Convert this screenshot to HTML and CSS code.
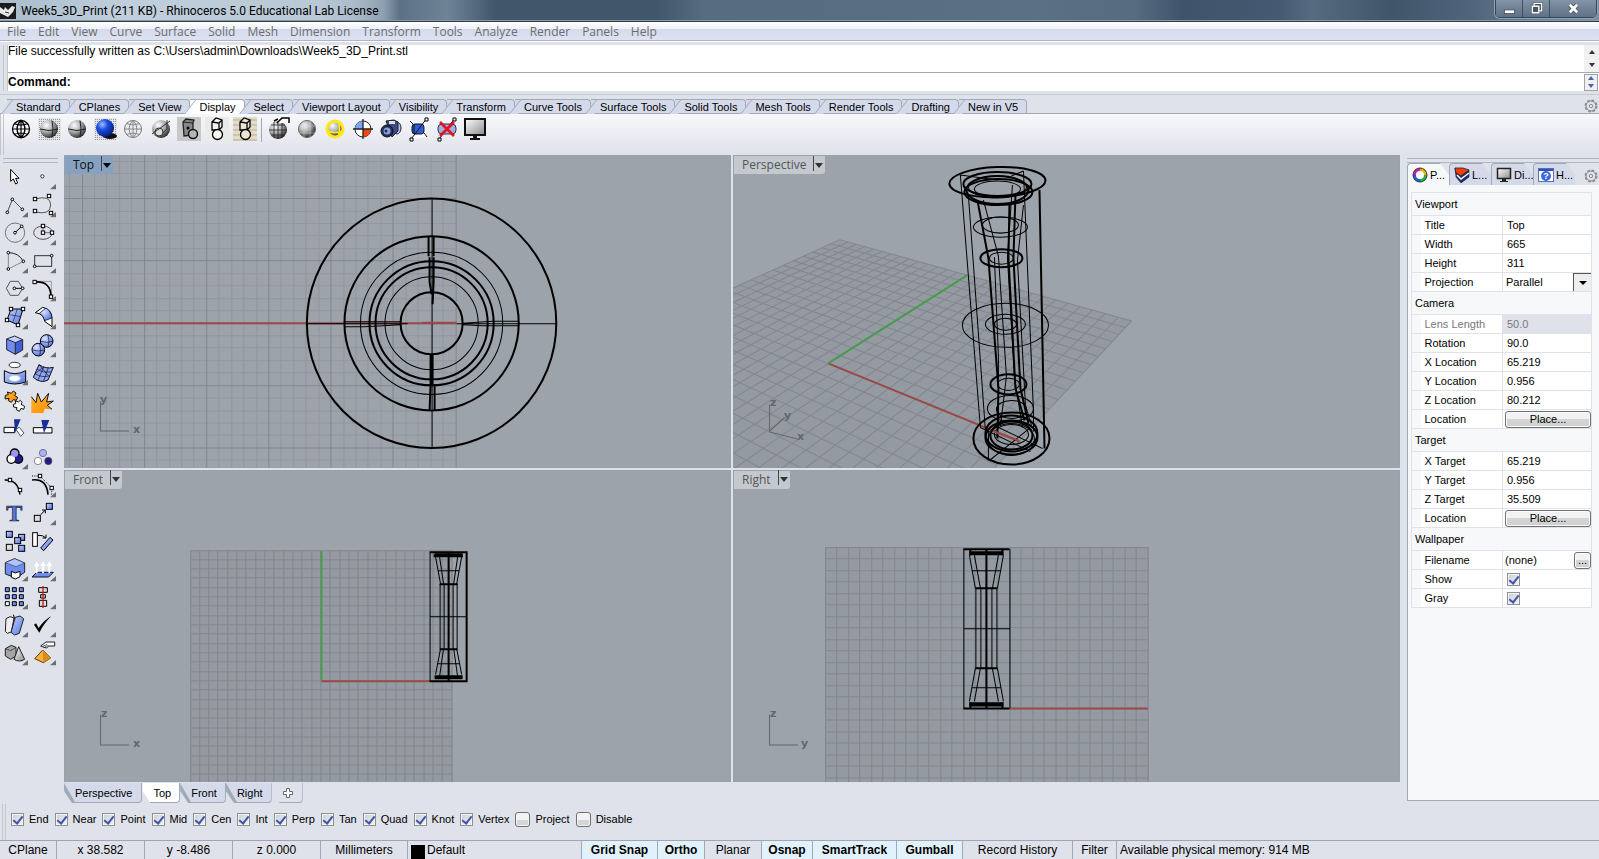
FILE: index.html
```html
<!DOCTYPE html>
<html lang="en">
  <head>
    <meta charset="UTF-8" />
    <meta name="viewport" content="width=device-width, initial-scale=1.0" />
    <title>Week5_3D_Print (211 KB) - Rhinoceros 5.0 Educational Lab License</title>
    <link rel="stylesheet" href="styles.css">
  </head>
  <body>
    <!-- shared gradients and shapes -->
    <svg class="defs" width="0" height="0" aria-hidden="true">
      <defs>
        <radialGradient id="g-ball" cx=".35" cy=".3" r=".75">
          <stop offset="0" stop-color="#fff" />
          <stop offset=".5" stop-color="#aaa" />
          <stop offset="1" stop-color="#222" />
        </radialGradient>
        <radialGradient id="g-blue" cx=".35" cy=".3" r=".75">
          <stop offset="0" stop-color="#9fc0ff" />
          <stop offset=".4" stop-color="#1c4fe0" />
          <stop offset="1" stop-color="#041a78" />
        </radialGradient>
        <radialGradient id="g-soft" cx=".35" cy=".3" r=".8">
          <stop offset="0" stop-color="#dbe4ff" />
          <stop offset="1" stop-color="#4a6ae0" />
        </radialGradient>
        <linearGradient id="g-face" x1="0" y1="0" x2="1" y2="1">
          <stop offset="0" stop-color="#c3d0ff" />
          <stop offset="1" stop-color="#5577e6" />
        </linearGradient>
        <linearGradient id="g-gray" x1="0" y1="0" x2="1" y2="1">
          <stop offset="0" stop-color="#fff" />
          <stop offset="1" stop-color="#8a8a8a" />
        </linearGradient>
        <linearGradient id="g-orange" x1="0" y1="0" x2="1" y2="1">
          <stop offset="0" stop-color="#ffb52e" />
          <stop offset="1" stop-color="#ff8a00" />
        </linearGradient>
        <pattern id="p-dots" width="2" height="2" patternUnits="userSpaceOnUse">
          <rect width="2" height="2" fill="#e3e5ea" />
          <rect width="1" height="1" fill="#9a9a9a" />
        </pattern>
        <path id="fly" d="M84 66v16H66z" fill="#6d6d6d" />
        <rect id="pt" x="-5" y="-5" width="10" height="10" fill="#fff" stroke="#000" stroke-width="3" />
        <circle id="dot" r="4" fill="#fff" stroke="#000" stroke-width="3" />
        <rect id="bx" x="-9" y="-9" width="18" height="18" fill="url(#g-face)" stroke="#000" stroke-width="3" />
        <rect id="gx" x="-9" y="-9" width="18" height="18" fill="#ddd" stroke="#000" stroke-width="3" />
        <g id="gear" fill="none" stroke="#8b8d92">
          <circle cx="7" cy="7" r="5.5" stroke-width="2" stroke-dasharray="2.6 1.7" />
          <circle cx="7" cy="7" r="5" />
          <circle cx="7" cy="7" r="1.7" />
        </g>
        <path id="globe" d="M5 14h18M14 5v18M7 8.500q7 3 14 0M7 19.500q7-3 14 0M14 5q-8 9 0 18M14 5q8 9 0 18" fill="none" />
      </defs>
    </svg>

    <header class="titlebar">
      <svg class="app-icon" viewBox="0 0 16 16">
        <rect width="16" height="16" fill="#1b1b1b" />
        <path d="M0 4l4 3 1-3 3 3 4-4 3 1-2 5-5 5-4-2-4-2z" fill="#e8e8e8" />
        <path d="M5 9l4 1" stroke="#333" />
      </svg>
      <h1>Week5_3D_Print (211 KB) - Rhinoceros 5.0 Educational Lab License</h1>
      <div class="window-buttons">
        <button aria-label="Minimize"><svg viewBox="0 0 14 14"><rect x="1.500" y="8.500" width="11" height="4" fill="#fff" stroke="#4a5666" /></svg></button>
        <button aria-label="Restore"><svg viewBox="0 0 14 14"><path d="M4.500 3.500v-2h8v8h-2M2.500 4.500h7v7h-7zM5 7h2v2H5z" fill="none" stroke="#4a5666" stroke-width="3" /><path d="M4.500 3.500v-2h8v8h-2M2.500 4.500h7v7h-7z" fill="none" stroke="#fff" stroke-width="1.500" /></svg></button>
        <button class="close" aria-label="Close"><svg viewBox="0 0 14 14"><path d="M3 3l8 8M11 3l-8 8" stroke="#4a5666" stroke-width="5" /><path d="M3 3l8 8M11 3l-8 8" stroke="#fff" stroke-width="3" /></svg></button>
      </div>
    </header>

    <nav class="menubar">
      <a href="#">File</a><a href="#">Edit</a><a href="#">View</a><a href="#">Curve</a><a href="#">Surface</a><a href="#">Solid</a><a href="#">Mesh</a><a href="#">Dimension</a><a href="#">Transform</a><a href="#">Tools</a><a href="#">Analyze</a><a href="#">Render</a><a href="#">Panels</a><a href="#">Help</a>
    </nav>

    <section class="command">
      <div class="history">
        <p>File successfully written as C:\Users\admin\Downloads\Week5_3D_Print.stl</p>
        <div class="scroll"><i class="up"></i><i class="down"></i></div>
      </div>
      <div class="prompt">
        <label for="command">Command:</label>
        <input type="text" id="command" />
        <div class="spin"><i class="up"></i><i class="down"></i></div>
      </div>
    </section>

    <section class="toolbar">
      <div class="tool-tabs">
        <button>Standard</button><button>CPlanes</button><button>Set View</button><button class="active">Display</button><button>Select</button><button>Viewport Layout</button><button>Visibility</button><button>Transform</button><button>Curve Tools</button><button>Surface Tools</button><button>Solid Tools</button><button>Mesh Tools</button><button>Render Tools</button><button>Drafting</button><button>New in V5</button>
        <svg class="gear" viewBox="0 0 14 14"><use href="#gear" /></svg>
      </div>
      <div class="tool-icons">
        <button aria-label="Wireframe"><svg viewBox="0 0 28 28"><circle cx="14" cy="14" r="8.500" fill="#fff" stroke="#000" stroke-width="1.300" /><use href="#globe" stroke="#000" stroke-width="1.200" /></svg></button>
        <button aria-label="Shaded"><svg viewBox="0 0 28 28"><rect x="3" y="3" width="23" height="22" fill="url(#p-dots)" /><circle cx="14" cy="14" r="9" fill="url(#g-ball)" /><path d="M5 14q9 3 18 0M17 5.500q2 8 0 17" fill="none" stroke="#222" /></svg></button>
        <button aria-label="Shade viewport"><svg viewBox="0 0 28 28"><circle cx="14" cy="14" r="9" fill="url(#g-ball)" /><path d="M5 14q9 3 18 0M17 5.500q2 8 0 17" fill="none" stroke="#222" /></svg></button>
        <button aria-label="Rendered"><svg viewBox="0 0 28 28"><rect x="3" y="3" width="23" height="22" fill="url(#p-dots)" /><ellipse cx="19" cy="21" rx="7" ry="3" fill="#111" /><circle cx="14" cy="13" r="9" fill="url(#g-blue)" /></svg></button>
        <button aria-label="Ghosted"><svg viewBox="0 0 28 28"><circle cx="14" cy="14" r="8.500" fill="#eceef2" stroke="#777" /><use href="#globe" stroke="#888" /></svg></button>
        <button aria-label="X-ray"><svg viewBox="0 0 28 28"><circle cx="14" cy="14" r="9" fill="url(#g-ball)" /><circle cx="12" cy="17" r="4" fill="#ddd" stroke="#333" /><path d="M5 19L23 6M20 5v9l-5 5" fill="none" stroke="#333" /></svg></button>
        <button aria-label="Technical"><svg viewBox="0 0 28 28"><rect x="2" y="2" width="24" height="24" fill="#c8c8c8" /><path d="M8 7l3-3 8 1-1 3v12l-9 1z" fill="#888" stroke="#222" stroke-width="1.300" /><path d="M8 7l10 1" stroke="#222" /><circle cx="18" cy="19" r="4.500" fill="#b5b5b5" stroke="#111" stroke-width="1.500" /><circle cx="13" cy="13" r="1.500" /></svg></button>
        <button aria-label="Artistic"><svg viewBox="0 0 28 28"><rect x="2" y="2" width="24" height="24" fill="#eaebe8" /><path d="M9 7l4-4 6 2v7l-3 3H9zM9 7l7 1v7M16 8l3-3" fill="#f4f4f2" stroke="#000" stroke-width="1.300" /><circle cx="14.500" cy="19.500" r="5" fill="#f4f4f2" stroke="#000" stroke-width="1.300" /></svg></button>
        <button aria-label="Pen"><svg viewBox="0 0 28 28"><rect x="2" y="2" width="24" height="24" fill="#e3dccb" /><path d="M2 5h24M2 10h24M2 15h24M2 20h24M2 25h24" stroke="#cfc4ac" stroke-width="2" /><path d="M9 7l4-4 6 2v7l-3 3H9zM9 7l7 1v7M16 8l3-3" fill="#ece5d4" stroke="#000" stroke-width="1.300" /><circle cx="14.500" cy="19.500" r="5" fill="#ece5d4" stroke="#000" stroke-width="1.300" /></svg></button>
        <span class="separator"></span>
        <button aria-label="Flat shade"><svg viewBox="0 0 28 28"><circle cx="13" cy="15" r="9" fill="url(#g-ball)" /><path d="M4 15h18M13 6v18M6 10h14M6 20h14M9 7v16M17 7v16" stroke="#222" stroke-width=".8" /><path d="M12 8l5-5h7v5M9 6l4-2" fill="#fff" stroke="#000" stroke-width="1.500" /></svg></button>
        <button aria-label="Shade selected"><svg viewBox="0 0 28 28"><circle cx="14" cy="14" r="8.500" fill="url(#g-ball)" stroke="#666" /><path d="M6 11h16M6 18h16M11 6v16M17 6v16" fill="none" stroke="#ccc" opacity=".5" /></svg></button>
        <button aria-label="Highlight"><svg viewBox="0 0 28 28"><circle cx="14" cy="14" r="8" fill="url(#g-ball)" stroke="#ffe81a" stroke-width="3" /><path d="M6 16q8 3 16 0M17 6q3 8 0 16" fill="none" stroke="#ffe81a" stroke-width="1.500" /></svg></button>
        <button aria-label="Colour analysis"><svg viewBox="0 0 28 28"><circle cx="14" cy="14" r="8" fill="#fff" stroke="#222" /><path d="M14 14V6a8 8 0 0 0-8 8z" fill="#7aa7f0" /><path d="M14 14h8a8 8 0 0 1-8 8z" fill="#f04a10" /><path d="M4 14h20M14 4v20" stroke="#222" stroke-width="1.300" /></svg></button>
        <button aria-label="Capture"><svg viewBox="0 0 28 28"><ellipse cx="20" cy="13" rx="4" ry="6" fill="#b9c4e8" stroke="#222" /><path d="M9 6l8-1 4 2v9l-6 6z" fill="#3a4a8a" stroke="#222" /><path d="M12 6h6v3h-6z" fill="#ddd" /><circle cx="10" cy="16" r="6" fill="#223060" stroke="#111" /><circle cx="10" cy="16" r="3.500" fill="#8fa0d8" /><circle cx="9" cy="16" r="1.500" fill="#223060" /></svg></button>
        <button aria-label="Clipping plane"><svg viewBox="0 0 28 28"><path d="M7 24L21 4v18z" fill="#fff" /><rect x="7" y="9" width="12" height="10" rx="3" fill="#2f5fd0" stroke="#113" /><path d="M9 9v10M5 6l4 4M6 24l4-5 12-16M19 18l3 4" fill="none" stroke="#111" /><path d="M5 23h3v3H5zM20 3h3v3h-3z" fill="#fff" stroke="#000" /></svg></button>
        <button aria-label="Disable clipping plane"><svg viewBox="0 0 28 28"><rect x="5" y="9" width="18" height="10" rx="4" fill="#9db0e0" stroke="#335" /><path d="M6 24l4-5 12-16" stroke="#111" /><path d="M5 23h3v3H5zM20 3h3v3h-3z" fill="#fff" stroke="#000" /><path d="M7 7l14 14M21 7L7 21" stroke="#e8101a" stroke-width="2.600" /></svg></button>
        <button aria-label="Full screen"><svg viewBox="0 0 28 28"><rect x="4" y="4" width="20" height="16" fill="url(#g-gray)" stroke="#111" stroke-width="2" /><path d="M12 20h4v3h3v2H9v-2h3z" fill="#111" /></svg></button>
      </div>
    </section>

    <main class="workspace">
      <aside class="side-tools">
        <button><svg viewBox="0 0 84 84"><path d="M32 22v36l8-7 7 15 6-3-6-14h10z" fill="#fff" stroke="#000" stroke-width="3" /></svg></button>
        <button><svg viewBox="0 0 84 84"><circle cx="43" cy="43" r="5" fill="#fff" stroke="#333" stroke-width="3" /><use href="#fly" /></svg></button>

        <button><svg viewBox="0 0 84 84"><path d="M22 67L37 28 67 58" fill="none" stroke="#555" stroke-width="3" /><use href="#dot" x="22" y="67" /><use href="#dot" x="37" y="28" /><use href="#dot" x="67" y="58" /><use href="#fly" /></svg></button>
        <button><svg viewBox="0 0 84 84"><path d="M21 27Q68 14 68 45T21 66" fill="none" stroke="#555" stroke-width="3" /><use href="#pt" x="21" y="27" /><use href="#pt" x="63" y="18" /><use href="#pt" x="21" y="63" /><use href="#fly" /><use href="#pt" x="69" y="69" /></svg></button>

        <button><svg viewBox="0 0 84 84"><circle cx="45" cy="44" r="29" fill="none" stroke="#777" stroke-width="3" /><path d="M45 44l20-19" stroke="#000" stroke-width="3" /><use href="#dot" x="45" y="44" /><use href="#dot" x="65" y="25" /><use href="#fly" /></svg></button>
        <button><svg viewBox="0 0 84 84"><ellipse cx="45" cy="44" rx="28" ry="20" fill="none" stroke="#555" stroke-width="3" /><path d="M45 24v20h27" fill="none" stroke="#333" stroke-width="2" /><use href="#pt" x="45" y="24" /><use href="#pt" x="45" y="44" /><use href="#pt" x="72" y="44" /><use href="#fly" /></svg></button>

        <button><svg viewBox="0 0 84 84"><path d="M25 20v49L70 46" fill="none" stroke="#888" stroke-width="3" /><path d="M25 20Q56 20 70 46" fill="none" stroke="#222" stroke-width="3" /><use href="#dot" x="25" y="20" /><use href="#dot" x="70" y="46" /><use href="#dot" x="25" y="69" /><use href="#fly" /></svg></button>
        <button><svg viewBox="0 0 84 84"><rect x="20" y="29" width="51" height="32" fill="none" stroke="#333" stroke-width="3" /><use href="#dot" x="71" y="29" /><use href="#dot" x="20" y="61" /><use href="#fly" /></svg></button>

        <button><svg viewBox="0 0 84 84"><path d="M19 43l12-21h24l13 21-13 21H31z" fill="none" stroke="#555" stroke-width="3" /><path d="M43 43h25" stroke="#000" stroke-width="3" /><use href="#dot" x="43" y="43" /><use href="#dot" x="68" y="43" /><use href="#fly" /></svg></button>
        <button><svg viewBox="0 0 84 84"><path d="M20 22h50v46" fill="none" stroke="#999" stroke-width="3" /><path d="M20 24Q68 20 69 68" fill="none" stroke="#000" stroke-width="5" /><use href="#fly" /><use href="#pt" x="20" y="24" /><use href="#pt" x="69" y="68" /></svg></button>

        <button><svg viewBox="0 0 84 84"><path d="M33 21h36L54 69 21 54z" fill="url(#g-face)" stroke="#000" stroke-width="3" /><path d="M52 21L38 62M28 38l35 6" stroke="#223" stroke-width="2" /><use href="#pt" x="33" y="21" /><use href="#pt" x="69" y="21" /><use href="#fly" /><use href="#pt" x="54" y="69" /><use href="#pt" x="21" y="54" /></svg></button>
        <button><svg viewBox="0 0 84 84"><path d="M22 32L44 16Q72 22 72 50v24L50 58Q50 36 22 32z" fill="#fff" stroke="#000" stroke-width="3" /><path d="M34 34L54 18Q70 28 72 48L50 56Q46 40 34 34z" fill="url(#g-soft)" stroke="#000" stroke-width="2" /><use href="#fly" /></svg></button>

        <button><svg viewBox="0 0 84 84"><path d="M20 27l24-9 24 11-22 9z" fill="#c3d0ff" /><path d="M20 27l26 11v35L20 59z" fill="#6f8df0" /><path d="M46 38l22-9v31L46 73z" fill="#3f5fd6" /><path d="M20 27l24-9 24 11v31L46 73 20 59zM20 27l26 11 22-9M46 38v35" fill="none" stroke="#223" stroke-width="3" /><use href="#fly" /></svg></button>
        <button><svg viewBox="0 0 84 84"><circle cx="56" cy="33" r="19" fill="url(#g-soft)" stroke="#000" stroke-width="3" /><circle cx="31" cy="59" r="19" fill="url(#g-soft)" stroke="#000" stroke-width="3" /><path d="M38 34q18 6 36 0M60 15q6 18 0 36M13 60q18 6 36 0M35 41q6 18 0 36" fill="none" stroke="#112" stroke-width="2" /><use href="#fly" /></svg></button>

        <button><svg viewBox="0 0 84 84"><ellipse cx="44" cy="21" rx="17" ry="8" fill="#fff" stroke="#333" stroke-width="3" /><path d="M13 38q31 18 64 0v34q-33 12-64 0z" fill="url(#g-face)" stroke="#000" stroke-width="3" /><ellipse cx="44" cy="61" rx="17" ry="9" fill="#fff" stroke="#bcd" stroke-width="3" /><use href="#fly" /></svg></button>
        <button><svg viewBox="0 0 84 84"><path d="M33 20q20 14 43 8L60 66q-22 12-44-8z" fill="#8ea6f0" stroke="#112" stroke-width="3" /><path d="M47 27L30 66M61 29L47 69M27 34q20 12 42 8M21 47q22 14 44 6M33 20l28 33M21 47l26-20" fill="none" stroke="#112" stroke-width="2" /><use href="#fly" /></svg></button>

        <button><svg viewBox="0 0 84 84"><path d="M22 18l12 4 6-7 8 6-4 8 9 5-4 9-9-2-6 8-9-5 2-7-12 2 1-11 9-2z" fill="url(#g-orange)" stroke="#111" stroke-width="3" /><path d="M46 44l9 4 6-5 5 6-3 6 11 6-3 9-8-3-5 9-9-5 2-6-10-2-1-8 7-2z" fill="#fff" stroke="#111" stroke-width="3" /></svg></button>
        <button><svg viewBox="0 0 84 84"><path d="M10 81V32l14 18 5-28 11 26 22-26-6 26 20-3-18 13 14 12-22-2-4 13z" fill="url(#g-orange)" /><path d="M10 32l14 18 5-28 11 26 22-26-6 26 20-3-18 13 14 12" fill="none" stroke="#111" stroke-width="3" /></svg></button>

        <button><svg viewBox="0 0 84 84"><path d="M12 40h32v16H12z" fill="#fff" stroke="#000" stroke-width="3" /><path d="M48 46l10-6 14 17-10 10z" fill="#fff" stroke="#555" stroke-width="3" /><path d="M42 16h20L45 56z" fill="#1c2f96" /></svg></button>
        <button><svg viewBox="0 0 84 84"><path d="M16 41h56v16H16z" fill="#fff" stroke="#000" stroke-width="3" /><path d="M40 18h24L48 58z" fill="#1c2f96" /></svg></button>

        <button><svg viewBox="0 0 84 84"><g stroke="#000" stroke-width="6"><circle cx="34" cy="51" r="12" /><circle cx="55" cy="51" r="12" /><circle cx="44" cy="34" r="12" /></g><circle cx="55" cy="51" r="11" fill="#1f1c86" /><circle cx="34" cy="51" r="11" fill="#fff" /><circle cx="44" cy="34" r="11" fill="#9a96ee" /><use href="#fly" /></svg></button>
        <button><svg viewBox="0 0 84 84"><g stroke="#555" stroke-width="2"><circle cx="45" cy="33" r="11" fill="#aab0ff" /><circle cx="30" cy="57" r="11" fill="#fff" /><circle cx="61" cy="57" r="11" fill="#1f1c86" /></g></svg></button>

        <button><svg viewBox="0 0 84 84"><path d="M14 30q40-2 46 44" fill="none" stroke="#000" stroke-width="4" /><use href="#pt" x="30" y="30" /><use href="#pt" x="60" y="60" /></svg></button>
        <button><svg viewBox="0 0 84 84"><path d="M12 30q44-6 48 44" fill="none" stroke="#000" stroke-width="5" /><path d="M12 18h24l35 36v22" fill="none" stroke="#000" stroke-width="3" stroke-dasharray="3 4" /><use href="#fly" /><use href="#pt" x="36" y="18" /><use href="#pt" x="71" y="54" /></svg></button>

        <button><svg viewBox="0 0 84 84"><text x="43" y="70" class="text-tool">T</text></svg></button>
        <button><svg viewBox="0 0 84 84"><path d="M38 50l14-14M42 36h10v10" fill="none" stroke="#000" stroke-width="3" /><use href="#bx" x="64" y="25" /><use href="#gx" x="28" y="61" /><use href="#fly" /></svg></button>

        <button><svg viewBox="0 0 84 84"><use href="#bx" x="28" y="25" /><use href="#bx" x="65" y="34" /><use href="#bx" x="53" y="44" /><use href="#gx" x="28" y="64" /><use href="#bx" x="65" y="67" /></svg></button>
        <button><svg viewBox="0 0 84 84"><rect x="14" y="20" width="14" height="41" fill="#fff" stroke="#000" stroke-width="3" /><path d="M30 28q14-2 24 8M54 26v10H44" fill="none" stroke="#000" stroke-width="3" /><path d="M38 66l28-32 9 8-28 32z" fill="url(#g-face)" stroke="#000" stroke-width="3" /></svg></button>

        <button><svg viewBox="0 0 84 84"><path d="M16 26l28-12 30 13v28L48 72 16 60z" fill="#6f8df0" stroke="#222" stroke-width="3" /><path d="M16 26l28-12 30 13-26 11z" fill="#b3c3ff" stroke="#345" stroke-width="2" /><path d="M34 52l12 5 14-5v16l-14 7-12-5z" fill="#fff" stroke="#000" stroke-width="3" /><use href="#fly" /></svg></button>
        <button><svg viewBox="0 0 84 84"><path d="M26 55h50L62 69H12z" fill="#6f8df0" stroke="#112" stroke-width="3" /><path d="M26 58V28m-6 8l6-9 6 9M45 58V28m-6 8l6-9 6 9M64 58V28m-6 8l6-9 6 9" fill="none" stroke="#fff" stroke-width="5" /><use href="#fly" /></svg></button>

        <button><svg viewBox="0 0 84 84"><g fill="#6f8df0" stroke="#000" stroke-width="3"><path d="M16 17h12v12H16zM37 17h12v12H37zM58 17h12v12H58zM16 38h12v12H16zM37 38h12v12H37zM58 38h12v12H58zM37 59h12v12H37zM58 59h12v12H58z" /><path d="M16 59h12v12H16z" fill="#fff" /></g><use href="#fly" /></svg></button>
        <button><svg viewBox="0 0 84 84"><g fill="#ddd" stroke="#000" stroke-width="3"><path d="M32 17h26v14H32zM38 38h14v10H38zM34 55h22v18H34z" /></g><path d="M45 12v66" stroke="#c81818" stroke-width="4" /><use href="#fly" /></svg></button>

        <button><svg viewBox="0 0 84 84"><path d="M18 26l12-6 12 4-8 42-12 4-6-6z" fill="#eee" stroke="#222" stroke-width="3" /><path d="M46 22l14-4 11 8-13 44-14 5-11-8z" fill="url(#g-face)" stroke="#222" stroke-width="3" /><path d="M40 14l4 12" stroke="#000" stroke-width="3" /><use href="#fly" /></svg></button>
        <button><svg viewBox="0 0 84 84"><path d="M18 44l6-4 8 14Q46 32 70 18 46 42 34 68z" /><use href="#fly" /></svg></button>

        <button><svg viewBox="0 0 84 84"><path d="M16 32l18-10 14 6v26L32 64 16 54z" fill="#a5a5a5" stroke="#222" stroke-width="3" /><path d="M16 32l16 6 16-10" fill="none" stroke="#222" stroke-width="2" /><path d="M56 26L42 64q16 10 32 0z" fill="url(#g-gray)" stroke="#222" stroke-width="3" /><use href="#fly" /></svg></button>
        <button><svg viewBox="0 0 84 84"><path d="M44 36L20 62l26 12 22-14z" fill="#f5b041" stroke="#5a3a00" stroke-width="3" /><path d="M44 36l2 38 22-14z" fill="#d98c1a" /><path d="M38 24l16-12h26v12H62l-6 6-8-2z" fill="#fff" stroke="#222" stroke-width="3" /><path d="M44 25l14-6M50 27l12-5" stroke="#222" stroke-width="2" /><use href="#fly" /></svg></button>
      </aside>

      <div class="center">
        <div class="viewports">
          <section class="viewport active">
            <svg viewBox="1 0 667 312" preserveAspectRatio="xMinYMin slice">
              <g id="grid-top"></g>
              <path d="M0 168h393" class="axis-x" />
              <g class="wire">
                <circle cx="368" cy="168" r="124.500" class="w2" />
                <circle cx="368" cy="168" r="87" class="w2" />
                <circle cx="368" cy="168" r="71" />
                <circle cx="368" cy="168" r="62" class="w2" />
                <circle cx="368" cy="168" r="56" class="w2" />
                <circle cx="368" cy="168" r="46.500" />
                <circle cx="368" cy="168" r="31" class="w2" />
                <path d="M368.500 43.500v249M393 168.500h100M281 171.500h20l36-2M281 166.500h56M399 169.500l20 1h36M399 168l30-2h26M244 168.500h100" />
                <path d="M365 81v20M370 81v20M366 102v25l2 12M370 102v25l-1 22M367 199v30l-1 26M369 199v30M371 229v26" class="w2" />
              </g>
              <path d="M359 167.500h34" class="axis-x" />
              <g class="gizmo"><path d="M37.500 246v29.500H66" /><text x="37" y="248">y</text><text x="70" y="278">x</text></g>
            </svg>
            <button class="vp-label">Top<i class="down"></i></button>
          </section>

          <section class="viewport">
            <svg viewBox="1 0 667 312" preserveAspectRatio="xMinYMin slice">
              <g id="grid-persp"></g>
              <path d="M96 208L287 286" class="axis-x" />
              <path d="M96 208L235 120" class="axis-y" />
              <g class="wire">
                <ellipse cx="265" cy="27" rx="48" ry="15" class="w2" transform="rotate(-2 265 27)" />
                <ellipse cx="265" cy="29" rx="34" ry="12" class="w2" />
                <ellipse cx="265" cy="32" rx="29" ry="11" />
                <ellipse cx="266" cy="37" rx="34" ry="13" class="w2" />
                <ellipse cx="265" cy="35" rx="31" ry="14" class="w2" />
                <ellipse cx="265" cy="34" rx="23" ry="8" />
                <ellipse cx="268" cy="72" rx="27" ry="10" />
                <ellipse cx="268" cy="70" rx="18" ry="8" />
                <ellipse cx="269" cy="103" rx="21" ry="9" class="w2" />
                <ellipse cx="269" cy="103" rx="12" ry="6" />
                <ellipse cx="273" cy="170" rx="43" ry="22" />
                <ellipse cx="273" cy="169" rx="20" ry="10" />
                <ellipse cx="273" cy="169" rx="11" ry="6" />
                <ellipse cx="276" cy="229" rx="18" ry="10" class="w2" />
                <ellipse cx="276" cy="229" rx="11" ry="6" />
                <ellipse cx="278" cy="253" rx="23" ry="13" />
                <ellipse cx="279" cy="254" rx="15" ry="9" />
                <ellipse cx="279" cy="283" rx="38" ry="26" class="w2" />
                <ellipse cx="279" cy="278" rx="26" ry="18" class="w2" />
                <ellipse cx="279" cy="282" rx="26" ry="17" class="w2" />
                <ellipse cx="279" cy="280" rx="21" ry="14" class="w2" />
                <ellipse cx="279" cy="279" rx="17" ry="10" />
                <ellipse cx="279" cy="284" rx="23" ry="16" />
                <path d="M228 20l20 252M236 40l17 235M291 16l10 240v20M291 50l-6 55 8 145 6 20M251 45l15 56 8 120-6 50M262 102l4 100v70M280 30l-5 72 7 120 8 50" />
                <path d="M307 35l5 258M245 45l11 58 10 130-1 50M277 50l-1 53 7 130 9 32M283 40l-2 63 7 130 8 35" class="w2" />
                <path d="M228 20l37 5M291 16l-12 5M248 272l50 24M257 305l40-32M262 270l48 23M256 305v-32" />
              </g>
              <path d="M262 276l24 9" class="axis-x" />
              <g class="gizmo"><path d="M37.500 249v27.500l28 7M37.500 276l15-14" /><text x="38" y="251">z</text><text x="52" y="264">y</text><text x="65" y="285">x</text></g>
            </svg>
            <button class="vp-label">Perspective<i class="down"></i></button>
          </section>

          <section class="viewport">
            <svg viewBox="1 0 667 312" preserveAspectRatio="xMinYMin slice">
              <g id="grid-front"></g>
              <path d="M258 81v129" class="axis-y" />
              <path d="M258 211h108" class="axis-x" />
              <g class="wire">
                <path d="M366.500 82v129M376.500 114v64M380.500 114v64M389.500 114v64M393.500 114v64M366 146.500h37M374 100.500h22M374 193.500h22M372 87l5 27M376 87l4 27M398 87l-5 27M394 87l-4 27M377 178l-5 26M380 178l-4 28M393 178l5 26M390 178l4 28" />
                <path d="M366 82h37v129h-37M385 82v129M376 114h18M376 179h18M371 84v3M398 84v3" class="w2" />
                <path d="M371 85h28M371 207h28" class="w4" />
              </g>
              <g class="gizmo"><path d="M37.500 244v30.500H66" /><text x="38" y="247">z</text><text x="70" y="277">x</text></g>
            </svg>
            <button class="vp-label">Front<i class="down"></i></button>
          </section>

          <section class="viewport">
            <svg viewBox="1 0 667 312" preserveAspectRatio="xMinYMin slice">
              <g id="grid-right"></g>
              <path d="M277 238h138" class="axis-x" />
              <g class="wire">
                <path d="M231.500 79v159M277.500 79v159M243.500 118v80M248.500 118v80M259.500 118v80M264.500 118v80M231 158.500h46M240 100.500h28M240 217.500h28M237 85l6 33M242 85l6 33M271 85l-6 33M266 85l-6 33M243 198l-6 33M248 198l-6 33M265 198l6 33M260 198l6 33" />
                <path d="M231 79h46M231 238h46M254 79v159M243 118h22M243 198h22M238 80v5M270 80v5M238 232v5M270 232v5" class="w2" />
                <path d="M237 83h34M237 234h34" class="w4" />
              </g>
              <g class="gizmo"><path d="M37.500 244v30.500H66" /><text x="38" y="247">z</text><text x="69" y="277">y</text></g>
            </svg>
            <button class="vp-label">Right<i class="down"></i></button>
          </section>
        </div>

        <div class="vp-tabs">
          <button>Perspective</button><button class="active">Top</button><button>Front</button><button>Right</button><button class="add" aria-label="New viewport"><svg viewBox="0 0 10 10"><path d="M3.500.5h3v3h3v3h-3v3h-3v-3h-3v-3h3z" fill="#fff" stroke="#666" /></svg></button>
        </div>
      </div>

      <aside class="panel">
        <div class="panel-tabs">
          <button class="active"><svg viewBox="0 0 16 16"><g fill="none" stroke-width="4"><path d="M8 3a5 5 0 0 1 5 5" stroke="#f0b000" /><path d="M13 8a5 5 0 0 1-5 5" stroke="#22b040" /><path d="M8 13a5 5 0 0 1-5-5" stroke="#2060e0" /><path d="M3 8a5 5 0 0 1 5-5" stroke="#d020a0" /></g><circle cx="8" cy="8" r="4" fill="#fff" /><circle cx="8" cy="8" r="7" fill="none" stroke="#333" /></svg>P...</button>
          <button><svg viewBox="0 0 16 16"><path d="M1 1l6 6 8-4v7l-8 6-5-6z" fill="#1b2f70" stroke="#222" stroke-width=".6" /><path d="M1 1l8 0 6 2-8 6-5-3z" fill="#f04010" stroke="#222" stroke-width=".8" /><path d="M3 8l4 4 8-6" fill="none" stroke="#fff" stroke-width="1.500" /></svg>L...</button>
          <button><svg viewBox="0 0 16 16"><rect x="1.500" y="1.500" width="13" height="10" fill="url(#g-gray)" stroke="#222" stroke-width="1.500" /><path d="M6 12h4v2h2v1H4v-1h2z" fill="#222" /></svg>Di...</button>
          <button><svg viewBox="0 0 16 16"><rect x=".5" y="1.500" width="15" height="13" fill="#fff" stroke="#5b6fb0" /><path d="M1 2h14v2H1z" fill="#3450b8" /><circle cx="8" cy="9" r="5" fill="#3a68e0" /><text x="8" y="12" class="help-mark">?</text></svg>H...</button>
          <svg class="gear" viewBox="0 0 14 14"><use href="#gear" /></svg>
        </div>
        <div class="panel-body">
          <table class="props">
            <colgroup><col class="gutter" /><col class="name" /><col /></colgroup>
            <tbody>
              <tr class="group"><th colspan="3">Viewport</th></tr>
              <tr><td></td><th>Title</th><td>Top</td></tr>
              <tr><td></td><th>Width</th><td>665</td></tr>
              <tr><td></td><th>Height</th><td>311</td></tr>
              <tr><td></td><th><label for="projection">Projection</label></th><td class="field"><div class="select"><select id="projection"><option>Parallel</option><option>Perspective</option></select><i class="down"></i></div></td></tr>
              <tr class="group"><th colspan="3">Camera</th></tr>
              <tr class="disabled"><td></td><th>Lens Length</th><td>50.0</td></tr>
              <tr><td></td><th>Rotation</th><td>90.0</td></tr>
              <tr><td></td><th>X Location</th><td>65.219</td></tr>
              <tr><td></td><th>Y Location</th><td>0.956</td></tr>
              <tr><td></td><th>Z Location</th><td>80.212</td></tr>
              <tr><td></td><th>Location</th><td class="field"><button class="place">Place...</button></td></tr>
              <tr class="group"><th colspan="3">Target</th></tr>
              <tr><td></td><th>X Target</th><td>65.219</td></tr>
              <tr><td></td><th>Y Target</th><td>0.956</td></tr>
              <tr><td></td><th>Z Target</th><td>35.509</td></tr>
              <tr><td></td><th>Location</th><td class="field"><button class="place">Place...</button></td></tr>
              <tr class="group"><th colspan="3">Wallpaper</th></tr>
              <tr><td></td><th>Filename</th><td class="field"><div class="file"><span>(none)</span><button>...</button></div></td></tr>
              <tr><td></td><th><label for="show">Show</label></th><td><input type="checkbox" id="show" checked /></td></tr>
              <tr><td></td><th><label for="gray">Gray</label></th><td><input type="checkbox" id="gray" checked /></td></tr>
            </tbody>
          </table>
        </div>
      </aside>
    </main>

    <section class="osnap">
      <label><input type="checkbox" checked />End</label>
      <label><input type="checkbox" checked />Near</label>
      <label><input type="checkbox" checked />Point</label>
      <label><input type="checkbox" checked />Mid</label>
      <label><input type="checkbox" checked />Cen</label>
      <label><input type="checkbox" checked />Int</label>
      <label><input type="checkbox" checked />Perp</label>
      <label><input type="checkbox" checked />Tan</label>
      <label><input type="checkbox" checked />Quad</label>
      <label><input type="checkbox" checked />Knot</label>
      <label><input type="checkbox" checked />Vertex</label>
      <label><input type="checkbox" class="push" />Project</label>
      <label><input type="checkbox" class="push" />Disable</label>
    </section>

    <footer class="statusbar">
      <span>CPlane</span>
      <span>x 38.582</span>
      <span>y -8.486</span>
      <span>z 0.000</span>
      <span>Millimeters</span>
      <span class="layer"><i></i>Default</span>
      <button class="on">Grid Snap</button>
      <button class="on">Ortho</button>
      <button>Planar</button>
      <button class="on">Osnap</button>
      <button class="on">SmartTrack</button>
      <button class="on">Gumball</button>
      <button>Record History</button>
      <button>Filter</button>
      <span class="memory">Available physical memory: 914 MB</span>
    </footer>

    <script src="grids.js"></script>
  </body>
</html>
```

FILE: styles.css
```css
* {
  box-sizing: border-box;
}
body {
  margin: 0;
  min-height: 100vh;
  display: flex;
  flex-direction: column;
  background: #dfe2ea;
  font-family: "Liberation Sans", Arial, sans-serif;
  font-size: 11px;
  color: #000;
}
button {
  font: inherit;
  color: inherit;
  border: none;
  background: none;
  padding: 0;
}
p,
h1 {
  margin: 0;
}
.defs {
  position: absolute;
}
.up,
.down {
  display: block;
  width: 0;
  height: 0;
  border: 3px solid transparent;
}
.up {
  border-top: none;
  border-bottom: 4px solid #333;
}
.down {
  border-bottom: none;
  border-top: 4px solid #333;
}

/* title bar */
.titlebar {
  height: 22px;
  display: flex;
  align-items: flex-start;
  border-bottom: 1px solid #2f3c4b;
  box-shadow: inset 0 -1px #8a9aac;
  background: linear-gradient(90deg, #a9bccb 0, #c0cfdb 8%, #b9c8d5 20%, #aebdcb 22%, #8da0b1 24%, #5d7186 25%, #6f8397 28%, #40566b 31%, #40566b 41%, #556b80 44%, #5a7085 65%, #566b80 71%, #3f546a 74%, #455a72 80%, #566b80 82%, #40556a 87%, #50657b 92%, #7c8ea0 100%);
}
.app-icon {
  width: 16px;
  height: 16px;
  margin: 3px 5px 0 0;
}
.titlebar h1 {
  font: 12px/22px Roboto, sans-serif;
  flex: 1;
}
.window-buttons {
  display: flex;
  margin-right: 2px;
  border: 1px solid #33475b;
  border-top: none;
  border-radius: 0 0 5px 5px;
  box-shadow: 0 0 0 1px #93a3b3;
}
.window-buttons button {
  width: 27px;
  height: 17px;
  border-right: 1px solid #3e5064;
  background: linear-gradient(#8394a5, #5e7186);
}
.window-buttons svg {
  width: 13px;
  height: 13px;
  display: block;
  margin: 0 auto;
}
.window-buttons .close {
  width: 46px;
  border-right: none;
}

/* menu */
.menubar {
  height: 20px;
  display: flex;
  padding-left: 7px;
  gap: 12px;
  border-bottom: 1px solid #fff;
  box-shadow: inset 0 -1px #b0b6c8;
  background: linear-gradient(#fff 0, #eef0f8 7px, #d5dbec 7px, #dee3f4 100%);
}
.menubar a {
  font: 12px/20px "Open Sans", sans-serif;
  color: #6d6d6d;
  text-decoration: none;
}

/* command area */
.command {
  margin-top: 3px;
  padding-left: 7px;
  position: relative;
}
.command::before {
  content: "";
  position: absolute;
  left: 3px;
  top: 0;
  bottom: 0;
  width: 3px;
  border: 1px solid #c0c6d0;
  border-width: 0 1px;
}
.history,
.prompt {
  display: flex;
  background: #fff;
  font-size: 12px;
}
.history {
  height: 28px;
  border-bottom: 1px solid #a0a9b6;
}
.history p {
  flex: 1;
  padding-left: 1px;
  line-height: 12px;
}
.scroll,
.spin {
  width: 15px;
  display: flex;
  flex-direction: column;
  align-items: center;
  justify-content: space-around;
  background: #f0f0f0;
}
.prompt {
  height: 18px;
  align-items: center;
}
.prompt label {
  font-weight: bold;
  padding-left: 1px;
}
.prompt input {
  flex: 1;
  border: none;
  outline: none;
  background: none;
}
.spin {
  width: 14px;
  height: 17px;
  margin-right: 1px;
  border: 1px solid #a0a0a8;
}
.spin .up {
  border-bottom-color: #4a5fae;
}
.spin .down {
  border-top-color: #4a5fae;
}

/* toolbar with tabs */
.toolbar {
  margin-top: 3px;
  border-top: 1px solid #c5c9d0;
}
.tool-tabs {
  display: flex;
  height: 19px;
  padding: 4px 1px 0 7px;
  border-bottom: 1px solid #a0a9b6;
}
.tool-tabs button {
  position: relative;
  isolation: isolate;
  height: 15px;
  padding: 0 8px 0 9px;
  line-height: 14px;
  background: #d5daea;
  border-top: 1px solid #a0a9b6;
  border-right: 1px solid #a0a9b6;
  border-bottom: 1px solid #a0a9b6;
  border-radius: 0 4px 0 0;
  white-space: nowrap;
}
.tool-tabs button::before {
  content: "";
  position: absolute;
  left: 0;
  top: -1px;
  width: 8px;
  height: 14px;
  background: inherit;
  border-left: 1px solid #a0a9b6;
  border-top: 1px solid #a0a9b6;
  transform: skewX(-38deg);
  z-index: -1;
}
.tool-tabs .active {
  background: #fff;
  border-bottom-color: #fff;
}
.gear {
  width: 14px;
  height: 14px;
  margin-left: auto;
}
.tool-icons {
  display: flex;
  height: 41px;
  padding: 1px 0 0 3px;
  border-left: 4px double #c0c6d0;
  background: linear-gradient(#f7f8fa, #dfe2ea);
}
.tool-icons button,
.tool-icons svg {
  width: 28px;
  height: 28px;
  display: block;
}
.tool-icons .separator {
  width: 1px;
  height: 24px;
  margin: 3px 3px 0 2px;
  background: #a0a9b6;
}

/* main area */
.workspace {
  flex: 1;
  display: flex;
}
.side-tools {
  width: 64px;
  display: grid;
  grid-template-columns: 28px 28px;
  align-content: start;
  margin-top: 3px;
  padding-top: 4px;
  position: relative;
}
.side-tools::before,
.panel::before {
  content: "";
  position: absolute;
  top: 0;
  left: 3px;
  right: 6px;
  height: 3px;
  border: 1px solid #b0b7c3;
  border-width: 1px 0;
}
.side-tools button,
.side-tools svg {
  width: 28px;
  height: 28px;
  display: block;
}
.text-tool {
  font: bold 72px "Liberation Serif", serif;
  text-anchor: middle;
  fill: #5577e6;
  stroke: #112;
  stroke-width: 2px;
}
.side-tools svg {
  overflow: visible;
}
.center {
  flex: 1;
  display: flex;
  flex-direction: column;
}
.viewports {
  flex: 1;
  display: grid;
  grid-template-columns: 1fr 1fr;
  grid-template-rows: 1fr 1fr;
  gap: 2px;
}
.viewport {
  position: relative;
  overflow: hidden;
  background: #9da3aa;
  box-shadow: inset 0 0 0 1px #98a1ae;
}
.viewport > svg {
  position: absolute;
  width: 100%;
  height: 100%;
}
.vp-label {
  position: absolute;
  left: 1px;
  top: 1px;
  height: 18px;
  display: flex;
  align-items: center;
  padding-left: 8px;
  font: 12px/18px "Open Sans", sans-serif;
  color: #555;
  background: #c4c9d0;
  border-radius: 0 0 3px 0;
}
.vp-label .down {
  box-sizing: content-box;
  border-width: 5px 4px 0;
  margin: 0 2px 0 9px;
  position: relative;
}
.vp-label .down::before {
  content: "";
  position: absolute;
  left: -6px;
  top: -12px;
  width: 1px;
  height: 15px;
  background: #444;
}
.viewport.active .vp-label {
  background: #86a2c0;
  color: #111;
}
.viewport.active .vp-label .down {
  border-top-color: #000;
}
.minor {
  stroke: #91979e;
  fill: none;
}
.major {
  stroke: #82868e;
  fill: none;
}
.fine {
  fill: #949aa1;
}
.wire {
  stroke: #000;
  fill: none;
  stroke-width: 1px;
}
.w2 {
  stroke-width: 2px;
}
.w4 {
  stroke-width: 4px;
}
.axis-x {
  stroke: #9a4848;
  stroke-width: 2px;
}
.axis-y {
  stroke: #4a9a4c;
  stroke-width: 2px;
}
.gizmo path {
  stroke: #63666b;
  fill: none;
}
.gizmo text {
  font: bold 11px "DejaVu Sans", sans-serif;
  fill: #63666b;
}

.vp-tabs {
  display: flex;
  height: 22px;
  padding-top: 1px;
}
.vp-tabs button {
  height: 20px;
  padding: 0 8px 0 11px;
  background: linear-gradient(60deg, #a0a9b6 9px, #d5daea 10px);
  border-right: 1px solid #a0a9b6;
  border-bottom: 1px solid #a0a9b6;
  border-radius: 0 0 4px 0;
  clip-path: polygon(0 0, 100% 0, 100% 100%, 8px 100%, 0 8px);
}
.vp-tabs button:first-child {
  padding-right: 9px;
}
.vp-tabs .active {
  background: #fff;
}
.vp-tabs .add {
  width: 31px;
  background: #dfe2ea;
}
.vp-tabs .add svg {
  width: 10px;
  height: 10px;
  display: block;
}

/* properties panel */
.panel {
  width: 199px;
  padding: 8px 0 3px 7px;
  display: flex;
  flex-direction: column;
  position: relative;
}
.panel::before {
  top: 3px;
  left: 7px;
  right: 0;
}
.panel-tabs {
  display: flex;
  height: 22px;
}
.panel-tabs button {
  width: 42px;
  height: 22px;
  display: flex;
  align-items: center;
  gap: 2px;
  padding-left: 4px;
  background: #d5daea;
  border: 1px solid #a0a9b6;
  border-width: 1px 0 0 1px;
  border-radius: 4px 0 0 0;
  clip-path: polygon(0 0, 33px 0, 100% 12px, 100% 100%, 0 100%);
  white-space: nowrap;
}
.panel-tabs button svg {
  width: 16px;
  height: 16px;
  flex: none;
}
.panel-tabs .active {
  background: #f7f8fa;
}
.panel-tabs .gear {
  margin: 6px 1px 0 auto;
}
.help-mark {
  font: bold 9px "Liberation Sans", sans-serif;
  fill: #fff;
  text-anchor: middle;
}
.panel-body {
  flex: 1;
  background: #f7f8fa;
  border: 1px solid #a0a9b6;
  border-width: 0 0 1px 1px;
  padding: 7px 7px 0 3px;
}
.props {
  width: 100%;
  border-collapse: collapse;
  table-layout: fixed;
}
.props .gutter {
  width: 9px;
}
.props .name {
  width: 82px;
}
.props td,
.props th {
  height: 19px;
  padding: 0 0 0 4px;
  border: 1px solid #dfe2ea;
  border-left: none;
  background: #fff;
  font-weight: normal;
  text-align: left;
  line-height: 16px;
}
.props tr:not(.group) td:first-child {
  padding: 0;
  background: #f7f8fa;
  border-left: 1px solid #dfe2ea;
  border-right: none;
}
.props .group th {
  height: 23px;
  padding-left: 3px;
  background: #f7f8fa;
  border-left: 1px solid #dfe2ea;
}
.props tr:not(.group) td:last-child {
  border-right: 1px solid #dfe2ea;
}
.props .disabled th,
.props .disabled td {
  color: #777;
}
.props tr.disabled td:last-child {
  background: #dfe2ea;
}
.props .field {
  padding-left: 2px;
}
.select,
.file {
  position: relative;
  display: flex;
  align-items: center;
  justify-content: space-between;
}
.select select {
  appearance: none;
  width: 100%;
  height: 17px;
  padding: 0 1px;
  border: none;
  background: #fff;
  font: inherit;
}
.select .down {
  box-sizing: content-box;
  border: none;
  position: absolute;
  right: 0;
  width: 17px;
  height: 17px;
  background: #eee;
  border-left: 1px solid #555;
  border-top: 1px solid #555;
}
.select .down::after {
  content: "";
  position: absolute;
  left: 5px;
  top: 7px;
  border: 4px solid transparent;
  border-bottom: none;
  border-top-color: #000;
}
.place,
.file button {
  height: 17px;
  border: 1px solid #707070;
  border-radius: 3px;
  background: linear-gradient(#f2f2f2 50%, #d5d5d5 50%, #cfcfcf);
  box-shadow: inset 0 0 0 1px #fcfcfc;
  line-height: 14px;
}
.place {
  display: block;
  width: 100%;
}
.file button {
  width: 17px;
}

input[type="checkbox"] {
  appearance: none;
  width: 13px;
  height: 13px;
  margin: 0;
  border: 1px solid #8e8f8f;
  background: linear-gradient(135deg, #c8cdd6, #f4f4f4);
  box-shadow: inset 0 0 0 1px #f4f4f4;
  position: relative;
}
.props input[type="checkbox"] {
  display: block;
}
input[type="checkbox"]:checked::after {
  content: "";
  position: absolute;
  left: 3px;
  top: 0;
  width: 4px;
  height: 8px;
  border: solid #3f56a6;
  border-width: 0 2px 2px 0;
  transform: rotate(38deg);
}
input[type="checkbox"].push {
  width: 15px;
  height: 15px;
  border-color: #707070;
  border-radius: 3px;
  background: linear-gradient(#f2f2f2 50%, #d5d5d5 50%);
}

/* object snaps */
.osnap {
  height: 36px;
  display: flex;
  align-items: center;
  gap: 6px;
  margin-left: 2px;
  padding: 0 0 6px 5px;
  border-left: 4px double #c0c6d0;
}
.osnap label {
  display: flex;
  align-items: center;
  gap: 5px;
}

/* status bar */
.statusbar {
  display: grid;
  grid-template-columns: 57px 88px 88px 88px 87px 174px 76px 47px 57px 51px 84px 66px 110px 44px 1fr;
  height: 19px;
  border-top: 1px solid #a0a5b5;
  font-size: 12px;
  line-height: 19px;
  text-align: center;
}
.statusbar > * {
  border-right: 1px solid #a0a9b6;
}
.statusbar .on {
  font-weight: bold;
  background: #e2f2fc;
}
.statusbar .layer {
  display: flex;
  gap: 2px;
}
.layer i {
  width: 14px;
  height: 14px;
  margin: 4px 0 0 3px;
  background: #000;
}
.statusbar .memory {
  text-align: left;
  padding-left: 3px;
  border-right: none;
}
```

FILE: grids.js
```javascript
const NS = "http://www.w3.org/2000/svg";

function addPath(parent, d, cls) {
  const path = document.createElementNS(NS, "path");
  path.setAttribute("d", d);
  path.setAttribute("class", cls);
  parent.appendChild(path);
}

// lines counted from the corner (x, y), `every` cells apart from the next major one
function flatGrid(id, x, y, w, h, step, every, dir) {
  const g = document.getElementById(id);
  let minor = "";
  let major = "";
  for (let i = 0; i * step <= w + 1; i++) {
    const px = Math.floor(x + dir * i * step) + 0.5;
    const seg = `M${px} ${y}v${h}`;
    if (i % every === 0) major += seg;
    else minor += seg;
  }
  const left = dir < 0 ? x - w : x;
  const first = dir < 0 ? 168 % step : y;
  const mid = Math.round((168 - first) / step);
  for (let i = 0; first + i * step < y + h; i++) {
    const py = Math.floor(first + i * step) + 0.5;
    const seg = `M${left} ${py}h${w}`;
    if (every === 1 || (i - mid) % every === 0) major += seg;
    else minor += seg;
  }
  addPath(g, minor, "minor");
  addPath(g, major, "major");
}

function shade(id, d) {
  addPath(document.getElementById(id), d, "fine");
}

// ground plane point (-1..1) to the perspective view
function project(u, v) {
  const w = 1 - 0.1604 * u + 0.2724 * v;
  const x = (27.1 * u + 402.4 * v + 829.3) / w - 733;
  const y = (6.7 * u - 13.4 * v + 363.3) / w - 155;
  return x.toFixed(1) + " " + y.toFixed(1);
}

flatGrid("grid-top", 392, 0, 392, 312, 12.43, 5, -1);

shade("grid-front", "M127 80h262v232H127z");
flatGrid("grid-front", 127, 80, 262, 232, 9.33, 1, 1);

shade("grid-right", "M93 77h323v235H93z");
flatGrid("grid-right", 93, 77, 323, 235, 11.5, 1, 1);

shade("grid-persp", `M${project(-1, -1)}L${project(1, -1)}L${project(1, 1)}L${project(-1, 1)}z`);
let lines = "";
for (let i = -14; i <= 14; i++) {
  const t = i / 14;
  lines += `M${project(t, -1)}L${project(t, 1)}M${project(-1, t)}L${project(1, t)}`;
}
addPath(document.getElementById("grid-persp"), lines, "major");
```
